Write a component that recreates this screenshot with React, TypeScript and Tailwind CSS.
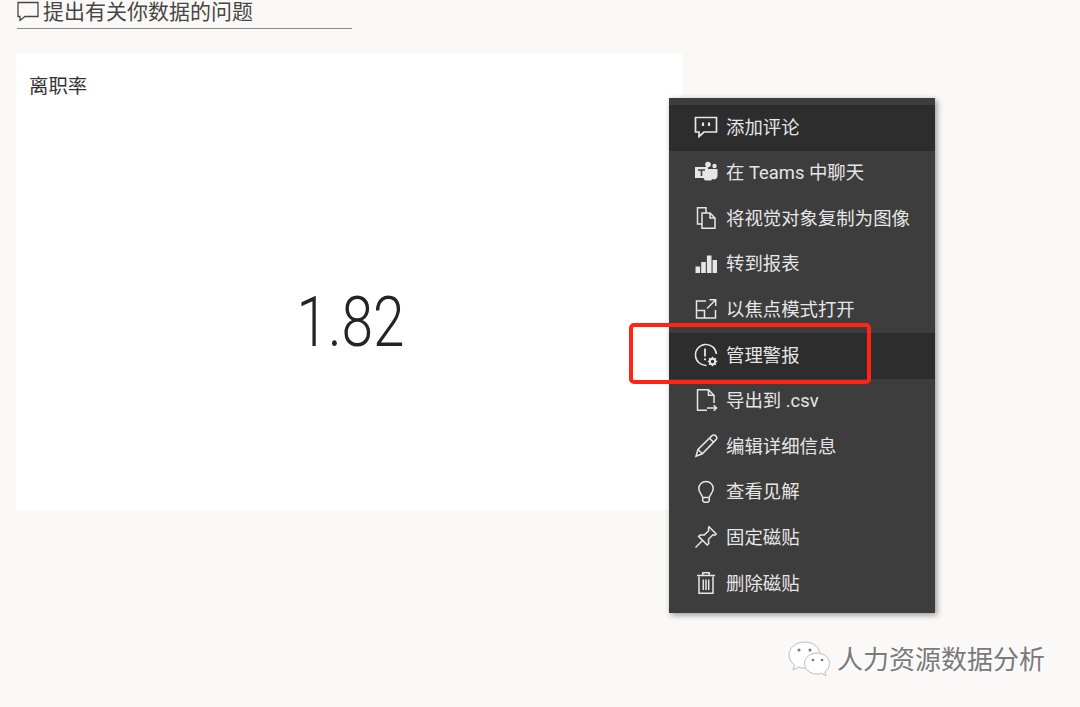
import type { ReactNode } from 'react';

const font = {
  cjk: 'font-["Noto_Sans_CJK_SC","Noto_Sans",sans-serif]',
  menu: 'font-["Roboto","Noto_Sans_CJK_SC",sans-serif]',
};

const Icon = ({ children }: { children: ReactNode }) => (
  <svg viewBox="0 0 24 24" className="h-6 w-6 shrink-0" fill="none" stroke="currentColor" strokeWidth="1.5">
    {children}
  </svg>
);

const items: { label: string; active?: boolean; icon: ReactNode }[] = [
  {
    label: '添加评论',
    active: true,
    icon: (
      <Icon>
        <path d="M1.500 2.500h21v14.500H10l-5 4.500v-4.500H1.500z" strokeWidth="1.700" />
        <path d="M9 7.500v3.500M15 7.500v3.500" strokeWidth="2.200" />
      </Icon>
    ),
  },
  {
    label: '在 Teams 中聊天',
    icon: (
      <Icon>
        <circle cx="14" cy="4.500" r="2.800" fill="currentColor" stroke="none" />
        <circle cx="20.500" cy="6" r="2.200" fill="currentColor" stroke="none" />
        <path d="M14 9h9.500v6.500a3.500 3.500 0 0 1-5 3.500l-1.500 1.500H11l-2-3h5z" fill="currentColor" stroke="none" />
        <path d="M1 7h13v11H1z" fill="currentColor" stroke="none" />
        <path d="M4 10h7M7.500 10v6" stroke="#3d3d3d" strokeWidth="1.600" />
      </Icon>
    ),
  },
  {
    label: '将视觉对象复制为图像',
    icon: (
      <Icon>
        <path d="M8 22.200V7h8l5 5v10.200z" />
        <path d="M16 7v5h5" />
        <path d="M8 18H3.500V1.800H12V7" />
      </Icon>
    ),
  },
  {
    label: '转到报表',
    icon: (
      <Icon>
        <path d="M1.500 14.500h4.600v6.500H1.500zM7.200 10h4.600v11H7.200zM12.900 3.500h4.600V21h-4.600zM18.600 8h4.400v13h-4.400z" fill="currentColor" stroke="none" />
      </Icon>
    ),
  },
  {
    label: '以焦点模式打开',
    icon: (
      <Icon>
        <path d="M12 4H2.500v17h19v-8" />
        <path d="M2.500 13.500h8v7.500" />
        <path d="M13 11.500 21.500 3M15.500 2.700h6.200v6.200" />
      </Icon>
    ),
  },
  {
    label: '管理警报',
    active: true,
    icon: (
      <Icon>
        <path d="M12.500 22.400A10.500 10.500 0 1 1 22.400 11" />
        <path d="M11 5.500v8" strokeWidth="1.800" />
        <circle cx="11" cy="16.300" r="1.100" fill="currentColor" stroke="none" />
        <circle cx="18.500" cy="18.500" r="2.700" strokeWidth="2" />
        <path d="M18.500 13.800v1.800M18.500 21.400v1.800M13.800 18.500h1.800M21.400 18.500h1.800M15.200 15.200l1.200 1.200M20.600 20.600l1.200 1.200M15.200 21.800l1.200-1.200M20.600 16.400l1.200-1.200" strokeWidth="1.600" />
      </Icon>
    ),
  },
  {
    label: '导出到 .csv',
    icon: (
      <Icon>
        <path d="M13 22.200H3.500V1.800h11l5.500 5.500V15" />
        <path d="M14.500 1.800v5.500H20" />
        <path d="M13 20h9.500M19.700 17.200l2.800 2.800-2.800 2.800" />
      </Icon>
    ),
  },
  {
    label: '编辑详细信息',
    icon: (
      <Icon>
        <path d="M2 22.200 4 15.500 17.800 1.900a2.800 2.800 0 0 1 4 4L8.300 19.800z" />
        <path d="M4 15.500l4.300 4.300M15.500 4.200l4.100 4.100" />
      </Icon>
    ),
  },
  {
    label: '查看见解',
    icon: (
      <Icon>
        <path d="M8.700 17.500C8.200 14.500 4.800 12.800 4.800 8.600a7.200 7.200 0 0 1 14.400 0c0 4.200-3.400 5.900-3.900 8.900z" />
        <path d="M8.700 17.500v3.200l1.500 1.600h3.600l1.500-1.600v-3.200" />
      </Icon>
    ),
  },
  {
    label: '固定磁贴',
    icon: (
      <Icon>
        <path d="M15 1.800 22.200 9l-1.200 1.200-2-.4-4.500 4.500.2 4.200-1.500 1.500L4.600 11.400l1.500-1.500 4.200.2 4.500-4.500-.4-2.200z" />
        <path d="M8.500 15.500 1.500 22.500" />
      </Icon>
    ),
  },
  {
    label: '删除磁贴',
    icon: (
      <Icon>
        <path d="M5 5.500v16.700h14V5.500" />
        <path d="M3 4.500h18M8.800 4.200V1.800h6.400v2.400" />
        <path d="M9.300 8.500v10.500M12 8.500v10.500M14.700 8.500v10.500" />
      </Icon>
    ),
  },
];

const Menu = () => (
  <div className={`absolute left-[669px] top-[98px] w-[266px] bg-[#3d3d3d] pt-[7px] shadow-[2px_2px_6px_rgba(0,0,0,0.4)] ${font.menu}`}>
    {items.map((item) => (
      <div
        key={item.label}
        className={`flex h-[45.600px] items-center gap-[8px] pl-[25px] text-[#e6e6e6] ${item.active ? 'bg-[#2d2d2d]' : ''}`}
      >
        <div className="mb-[2px]">{item.icon}</div>
        <span className="text-[18.400px] leading-none">{item.label}</span>
      </div>
    ))}
    <div className="h-[6px]" />
  </div>
);

const Watermark = () => (
  <div className={`absolute left-[787px] top-[640px] flex items-center gap-[6px] ${font.cjk}`}>
    <svg viewBox="0 0 44 38" className="h-[38px] w-[44px]">
      <path d="M18 2C8.500 2 2 8 2 15c0 4 2 7.500 5.500 10L6 30l5.500-2.800c2 .6 4 .9 6.500.9 8.500 0 15-6 15-13.100S26.500 2 18 2z" fill="#fff" stroke="#bdbdbd" />
      <path d="M30 13c-7 0-12.500 4.700-12.500 10.500S23 34 30 34c1.700 0 3-.2 4.500-.7L39 36l-1.200-4.200c3-2 4.700-5 4.700-8.300C42.500 17.700 37 13 30 13z" fill="#fff" stroke="#bdbdbd" />
      <circle cx="12" cy="10" r="1.500" fill="#777" />
      <circle cx="23" cy="10" r="1.500" fill="#777" />
      <circle cx="26" cy="20" r="1.300" fill="#777" />
      <circle cx="35" cy="20" r="1.300" fill="#777" />
    </svg>
    <span className="pb-[3px] text-[26px] leading-none text-[#7a7a7a] [text-shadow:1px_1px_1px_#fff]">人力资源数据分析</span>
  </div>
);

export default function App() {
  return (
    <div className="relative h-[707px] w-[1080px] overflow-hidden bg-[#faf9f8]">
      <div className="pl-[16px]">
        <div className={`ml-[1px] flex h-[29px] w-[335px] items-start gap-[4px] border-b border-[#8a8886] text-[#484644] ${font.cjk}`}>
          <svg viewBox="0 0 22 22" className="h-[22px] w-[22px] shrink-0" fill="none" stroke="currentColor" strokeWidth="1.300">
            <path d="M1 2.500h20v14H8l-5 4v-4H1z" />
          </svg>
          <span className="text-[21px] leading-[21px]">提出有关你数据的问题</span>
        </div>

        <div className="mt-[24px] flex h-[457px] w-[666px] flex-col bg-white">
          <div className={`pl-[13px] pt-[20px] text-[19.400px] leading-[24px] text-[#333] ${font.cjk}`}>离职率</div>
          <div className="flex flex-1 items-center justify-center pl-[4px] pt-[36px] font-['Roboto',sans-serif] text-[71px] font-light leading-none text-[#252423]">
            <span className="inline-block scale-x-[0.8]">1.82</span>
          </div>
        </div>
      </div>

      <Menu />

      {/* red highlight drawn over the screenshot */}
      <div className="absolute left-[629px] top-[323px] h-[61px] w-[242px] rounded-[5px] border-[4px] border-[#ff2415]" />

      <Watermark />
    </div>
  );
}
